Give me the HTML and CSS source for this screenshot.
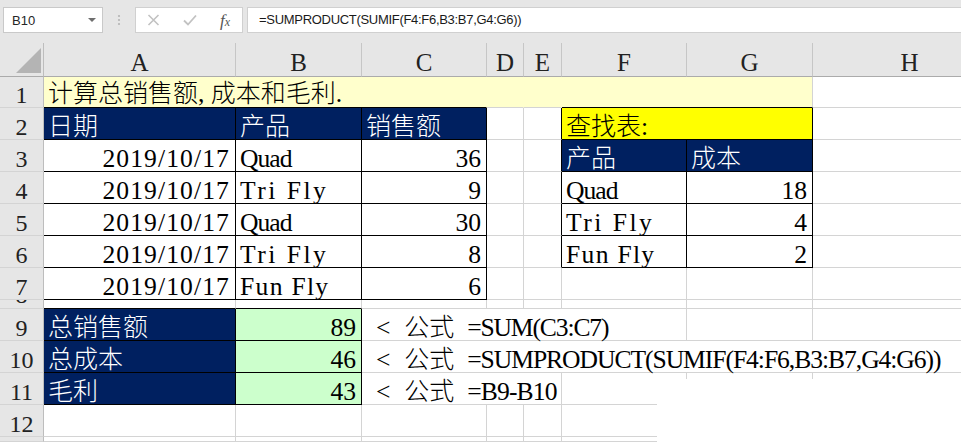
FILE: index.html
```html
<!DOCTYPE html>
<html>
<head>
<meta charset="utf-8">
<link rel="stylesheet" href="styles.css">
</head>
<body>
<div class="app">
  <div class="fbar">
    <div class="namebox"><span>B10</span><span class="dd"></span></div>
    <div class="grip"><svg width="4" height="12" viewBox="0 0 4 12"><circle cx="2" cy="2" r="1.1" fill="#b5b5b5"/><circle cx="2" cy="6" r="1.1" fill="#b5b5b5"/><circle cx="2" cy="10" r="1.1" fill="#b5b5b5"/></svg></div>
    <div class="btns">
      <svg class="ic" width="13" height="12" viewBox="0 0 13 12"><path d="M1.5 1 L11.5 11 M11.5 1 L1.5 11" stroke="#c2c2c2" stroke-width="1.6" fill="none"/></svg>
      <svg class="ic ok" width="14" height="12" viewBox="0 0 14 12"><path d="M1 6.5 L5 10.5 L13 1.5" stroke="#c2c2c2" stroke-width="1.8" fill="none"/></svg>
      <span class="fx"><i>f</i><span class="fxx">x</span></span>
    </div>
    <div class="finput">=SUMPRODUCT(SUMIF(F4:F6,B3:B7,G4:G6))</div>
  </div>

  <div class="sheet">
    <!-- column headers -->
    <div class="corner"><svg width="25" height="25" viewBox="0 0 25 25"><polygon points="25,0 25,25 0,25" fill="#b4b4b4"/></svg></div>
    <div class="ch">A</div><div class="ch">B</div><div class="ch">C</div><div class="ch">D</div><div class="ch">E</div><div class="ch">F</div><div class="ch">G</div><div class="ch">H</div>

    <!-- row 1 -->
    <div class="rh r1">1</div>
    <div class="c ly r1 span3 nb kb"><span class="j">计算总销售额</span><span class="hw">,</span><span class="j">成本和毛利</span><span class="hw">.</span></div>
    <div class="c ly r1 nb"></div>
    <div class="c ly r1 nb"></div>
    <div class="c ly r1 span2 kb"></div>
    <div class="c r1"></div>

    <!-- row 2 -->
    <div class="rh">2</div>
    <div class="c nv kr kb"><span class="j">日期</span></div>
    <div class="c nv kr kb"><span class="j">产品</span></div>
    <div class="c nv kr kb"><span class="j">销售额</span></div>
    <div class="c"></div>
    <div class="c kr"></div>
    <div class="c yl span2 kr kb"><span class="j">查找表</span><span class="hw">:</span></div>
    <div class="c"></div>

    <!-- row 3 -->
    <div class="rh">3</div>
    <div class="c num dt kr kb">2019/10/17</div>
    <div class="c qd kr kb">Quad</div>
    <div class="c num kr kb">36</div>
    <div class="c"></div>
    <div class="c kr"></div>
    <div class="c nv kr kb"><span class="j">产品</span></div>
    <div class="c nv kr kb"><span class="j">成本</span></div>
    <div class="c"></div>

    <!-- row 4 -->
    <div class="rh">4</div>
    <div class="c num dt kr kb">2019/10/17</div>
    <div class="c tf kr kb">Tri Fly</div>
    <div class="c num kr kb">9</div>
    <div class="c"></div>
    <div class="c kr"></div>
    <div class="c qd kr kb">Quad</div>
    <div class="c num kr kb">18</div>
    <div class="c"></div>

    <!-- row 5 -->
    <div class="rh">5</div>
    <div class="c num dt kr kb">2019/10/17</div>
    <div class="c qd kr kb">Quad</div>
    <div class="c num kr kb">30</div>
    <div class="c"></div>
    <div class="c kr"></div>
    <div class="c tf kr kb">Tri Fly</div>
    <div class="c num kr kb">4</div>
    <div class="c"></div>

    <!-- row 6 -->
    <div class="rh">6</div>
    <div class="c num dt kr kb">2019/10/17</div>
    <div class="c tf kr kb">Tri Fly</div>
    <div class="c num kr kb">8</div>
    <div class="c"></div>
    <div class="c kr"></div>
    <div class="c ff kr kb">Fun Fly</div>
    <div class="c num kr kb">2</div>
    <div class="c"></div>

    <!-- row 7 -->
    <div class="rh">7</div>
    <div class="c num dt kr kb">2019/10/17</div>
    <div class="c ff kr kb">Fun Fly</div>
    <div class="c num kr kb">6</div>
    <div class="c"></div>
    <div class="c"></div>
    <div class="c"></div>
    <div class="c"></div>
    <div class="c"></div>

    <!-- row 8 (nearly hidden) -->
    <div class="rh s clip"><div class="clip8">8</div></div>
    <div class="c s kb"></div>
    <div class="c s kb"></div>
    <div class="c s"></div>
    <div class="c s"></div>
    <div class="c s"></div>
    <div class="c s"></div>
    <div class="c s"></div>
    <div class="c s"></div>

    <!-- row 9 -->
    <div class="rh">9</div>
    <div class="c nv kr kb"><span class="j">总销售额</span></div>
    <div class="c gr num kr kb">89</div>
    <div class="c span4"><span class="lead"> &lt; </span><span class="j">公式</span><span class="sp"> </span><span class="f9">=SUM(C3:C7)</span></div>
    <div class="c"></div>
    <div class="c"></div>

    <!-- row 10 -->
    <div class="rh">10</div>
    <div class="c nv kr kb"><span class="j">总成本</span></div>
    <div class="c gr num kr kb">46</div>
    <div class="c span6"><span class="lead"> &lt; </span><span class="j">公式</span><span class="sp"> </span><span class="f10">=SUMPRODUCT(SUMIF(F4:F6,B3:B7,G4:G6))</span></div>

    <!-- row 11 -->
    <div class="rh">11</div>
    <div class="c nv kr kb"><span class="j">毛利</span></div>
    <div class="c gr num kr kb">43</div>
    <div class="c span3"><span class="lead"> &lt; </span><span class="j">公式</span><span class="sp"> </span><span class="f11">=B9-B10</span></div>
    <div class="c"></div>
    <div class="c"></div>
    <div class="c"></div>

    <!-- row 12 -->
    <div class="rh">12</div>
    <div class="c"></div><div class="c"></div><div class="c"></div><div class="c"></div>
    <div class="c"></div><div class="c"></div><div class="c"></div><div class="c"></div>

    <!-- row 13 (cut) -->
    <div class="rh s"></div>
    <div class="c s"></div><div class="c s"></div><div class="c s"></div><div class="c s"></div>
    <div class="c s"></div><div class="c s"></div><div class="c s"></div><div class="c s"></div>
  </div>

  <div class="mask"></div>
</div>
</body>
</html>
```

FILE: styles.css
```css
html, body {
  margin: 0;
  padding: 0;
  background: #ffffff;
}

.app {
  position: relative;
  width: 961px;
  height: 442px;
  overflow: hidden;
  background: #ffffff;
}

/* ---------- formula bar ---------- */
.fbar {
  display: flex;
  align-items: flex-start;
  height: 43px;
  box-sizing: border-box;
  padding: 7px 0 0 3px;
  background: #e6e6e6;
}

.namebox {
  width: 100px;
  height: 26px;
  box-sizing: border-box;
  border: 1px solid #c9c9c9;
  background: #ffffff;
  display: flex;
  align-items: center;
  justify-content: space-between;
  padding: 0 6px 0 8px;
  font: 13px "Liberation Sans", Arial, sans-serif;
  color: #262626;
}

.dd {
  width: 0;
  height: 0;
  border-left: 4px solid transparent;
  border-right: 4px solid transparent;
  border-top: 4px solid #6e6e6e;
}

.grip {
  width: 32px;
  height: 26px;
  display: flex;
  align-items: center;
  justify-content: center;
}

.btns {
  width: 108px;
  height: 26px;
  box-sizing: border-box;
  border: 1px solid #d0d0d0;
  background: #ffffff;
  display: flex;
  align-items: center;
  padding-left: 11px;
}

.ic {
  display: block;
}

.ok {
  margin-left: 23px;
}

.fx {
  margin-left: 23px;
  font-family: "Liberation Serif", serif;
  font-size: 17px;
  color: #555555;
  line-height: 1;
}

.fx i {
  font-style: italic;
}

.fxx {
  font-style: italic;
  font-size: 12px;
}

.finput {
  flex: 1;
  margin-left: 4px;
  height: 26px;
  box-sizing: border-box;
  border: 1px solid #d0d0d0;
  border-right: none;
  background: #ffffff;
  padding-left: 11px;
  font: 13px "Liberation Sans", Arial, sans-serif;
  letter-spacing: -0.3px;
  line-height: 24px;
  color: #1a1a1a;
  white-space: nowrap;
}

/* ---------- sheet ---------- */
.sheet {
  display: grid;
  grid-template-columns: 44px 192px 126px 125px 37px 38px 125px 126px 194px;
  grid-template-rows: 34px 31px repeat(6, 32px) 9px repeat(4, 32px) 5px;
  background: #ffffff;
}

.corner {
  background: #e6e6e6;
  box-sizing: border-box;
  border-right: 1px solid #bdbdbd;
  border-bottom: 1px solid #ababab;
  padding: 5px 0 0 16px;
}

.corner svg {
  display: block;
}

.ch {
  background: #e6e6e6;
  box-sizing: border-box;
  border-right: 1px solid #c6c6c6;
  border-bottom: 1px solid #ababab;
  text-align: center;
  font-family: "Liberation Serif", serif;
  font-size: 25px;
  line-height: 27px;
  padding-top: 6px;
  color: #222222;
}

.rh {
  background: #e6e6e6;
  box-sizing: border-box;
  border-right: 1px solid #bdbdbd;
  border-bottom: 1px solid #d4d4d4;
  text-align: center;
  font-family: "Liberation Serif", serif;
  font-size: 24px;
  line-height: 24px;
  padding-top: 7px;
  color: #222222;
}

.rh.r1 {
  padding-top: 6px;
}

.rh.clip {
  overflow: hidden;
}

.clip8 {
  margin-top: -17px;
}

.c {
  box-sizing: border-box;
  border-right: 1px solid #d4d4d4;
  border-bottom: 1px solid #d4d4d4;
  white-space: pre;
  padding: 6px 4px 0 4px;
  line-height: 25px;
  font-family: "Liberation Serif", "Noto Sans CJK SC", serif;
  font-size: 25.6px;
  color: #000000;
}

.c.r1 {
  padding-top: 3px;
  line-height: 27px;
}

.c.s,
.rh.s {
  padding: 0;
}

.j {
  font-family: "Noto Sans CJK SC", "Noto Sans CJK JP", sans-serif;
  font-size: 25px;
  font-weight: 300;
  letter-spacing: 0;
  line-height: 0;
}

.hw {
  letter-spacing: 6.4px;
}

.lead {
  letter-spacing: 3.7px;
}

.sp {
  letter-spacing: 6.4px;
}

.f9 {
  letter-spacing: -1.15px;
}

.f10 {
  letter-spacing: -1.05px;
}

.f11 {
  letter-spacing: -0.85px;
}

.dt {
  letter-spacing: 1.1px;
}

.qd {
  letter-spacing: -1px;
}

.tf {
  letter-spacing: 2.5px;
}

.ff {
  letter-spacing: 1.3px;
}

.num {
  text-align: right;
  padding-right: 5px;
}

.kr {
  border-right-color: #000000;
}

.kb {
  border-bottom-color: #000000;
}

.nb {
  border-right-color: #ffffcc;
}

.ly {
  background: #ffffcc;
}

.nv {
  background: #002060;
  color: #ffffff;
}

.yl {
  background: #ffff00;
}

.gr {
  background: #ccffcc;
}

.span2 { grid-column: span 2; }
.span3 { grid-column: span 3; }
.span4 { grid-column: span 4; }
.span6 { grid-column: span 6; }

.mask {
  position: absolute;
  left: 657px;
  top: 379px;
  right: 0;
  bottom: 0;
  background: #ffffff;
}
```
